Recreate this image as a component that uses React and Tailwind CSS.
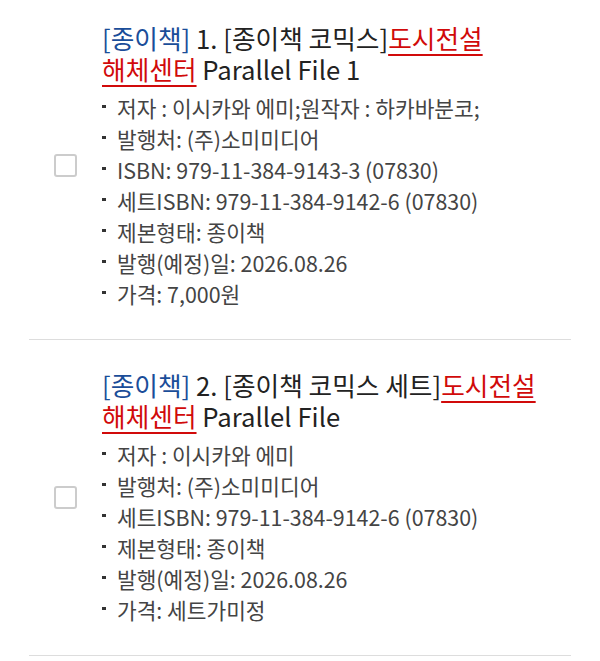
const books = [
  {
    no: 1,
    title: '[종이책 코믹스]',
    link: '도시전설 해체센터',
    rest: 'Parallel File 1',
    specs: [
      '저자 : 이시카와 에미;원작자 : 하카바분코;',
      '발행처: (주)소미미디어',
      'ISBN: 979-11-384-9143-3 (07830)',
      '세트ISBN: 979-11-384-9142-6 (07830)',
      '제본형태: 종이책',
      '발행(예정)일: 2026.08.26',
      '가격: 7,000원',
    ],
  },
  {
    no: 2,
    title: '[종이책 코믹스 세트]',
    link: '도시전설 해체센터',
    rest: 'Parallel File',
    specs: [
      '저자 : 이시카와 에미',
      '발행처: (주)소미미디어',
      '세트ISBN: 979-11-384-9142-6 (07830)',
      '제본형태: 종이책',
      '발행(예정)일: 2026.08.26',
      '가격: 세트가미정',
    ],
  },
];

function BookRow({ book, first }) {
  return (
    <li className={`flex items-center border-b border-[#dddddd] pb-[30px] ${first ? 'pt-[22px]' : 'pt-[29px]'}`}>
      <div className="flex w-[73px] shrink-0 justify-center">
        <span className="block h-[23px] w-[23px] rounded-[3px] border-2 border-[#cccccc] bg-white" />
      </div>
      <div className="min-w-0 flex-1">
        <p className="break-keep text-[25.7px] leading-[31px] text-[#222222]">
          <span className="text-[#1a4d99]">[종이책]</span> {book.no}. {book.title}
          <a href="#" className="text-[#d10a0a] underline decoration-2 underline-offset-[5px]">
            {book.link}
          </a>{' '}
          {book.rest}
        </p>
        <ul className="mt-[8px]">
          {book.specs.map((s) => (
            <li key={s} className="flex items-center text-[21.4px] leading-[31px] text-[#444444]">
              <span className="mr-[11px] mb-[3px] h-[3px] w-[4px] shrink-0 bg-[#333333]" />
              {s}
            </li>
          ))}
        </ul>
      </div>
    </li>
  );
}

export default function App() {
  return (
    <div className="min-h-screen bg-white px-[29px]" style={{ fontFamily: '"Noto Sans CJK KR", "Noto Sans", sans-serif' }}>
      <ul>
        {books.map((b, i) => (
          <BookRow key={b.no} book={b} first={i === 0} />
        ))}
      </ul>
    </div>
  );
}
